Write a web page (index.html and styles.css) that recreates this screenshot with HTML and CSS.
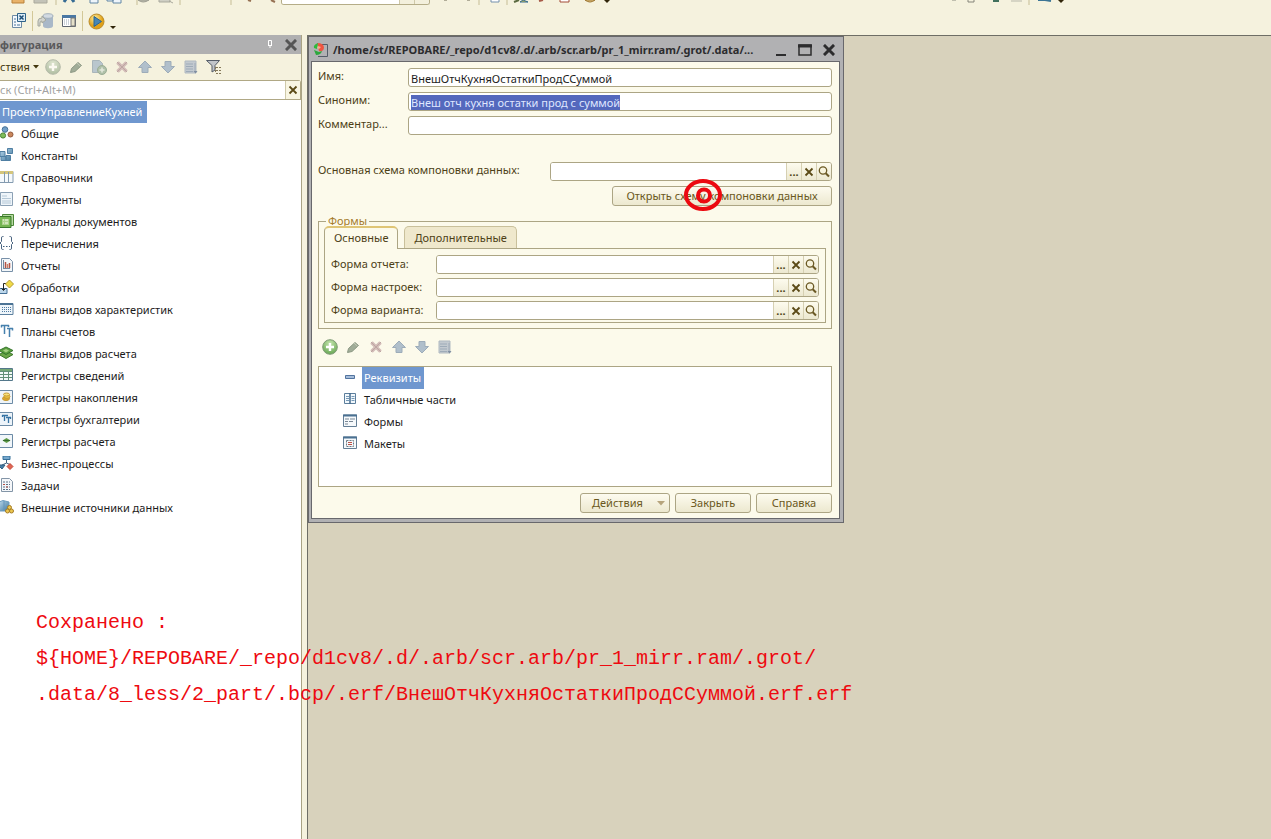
FILE: index.html
```
<!DOCTYPE html>
<html lang="ru">
<head>
<meta charset="utf-8">
<title>Конфигуратор</title>
<link rel="stylesheet" href="styles.css">
</head>
<body>
<svg class="defs" aria-hidden="true">
  <defs>
    <radialGradient id="green" cx="50%" cy="25%" r="75%"><stop offset="0" stop-color="#c3e4ac"/><stop offset="1" stop-color="#69a854"/></radialGradient>
    <radialGradient id="gold" cx="40%" cy="30%"><stop offset="0" stop-color="#fff0a0"/><stop offset="1" stop-color="#e0a018"/></radialGradient>
    <linearGradient id="blue" x2="1" y2="1"><stop offset="0" stop-color="#b9d8ec"/><stop offset="1" stop-color="#41779c"/></linearGradient>
  </defs>
  <symbol id="i-add" viewBox="0 0 16 16"><circle cx="8" cy="8" r="7.3" fill="url(#green)" stroke="#7f9a76"/><path d="M8 4v8M4 8h8" stroke="#fff" stroke-width="2.4"/></symbol>
  <symbol id="i-edit" viewBox="0 0 16 16"><path d="M2.500 13.500l1-4 6.500-6 3.500 3-6.500 6z" fill="#a1ad98" stroke="#8c9884"/><path d="M9 4l3.500 3.200" stroke="#c4cbb8"/></symbol>
  <symbol id="i-del" viewBox="0 0 16 16"><path d="M3.500 3.500l9 9M12.500 3.500l-9 9" stroke="#d3bcb8" stroke-width="3.500"/><path d="M3 3l10 10M13 3L3 13" stroke="#bda6a2" stroke-width="1"/></symbol>
  <symbol id="i-up" viewBox="0 0 16 16"><path d="M8 2l6.500 6.500H11v5H5v-5H1.500z" fill="#b0bfcb" stroke="#9dacb9"/></symbol>
  <symbol id="i-down" viewBox="0 0 16 16"><path d="M8 14L1.500 7.500H5v-5h6v5h3.500z" fill="#b0bfcb" stroke="#9dacb9"/></symbol>
  <symbol id="i-list" viewBox="0 0 16 16"><path d="M2 2h11v12H2z" fill="#c3cad0" stroke="#b0b9c1"/><path d="M3 5h7M3 7.500h7M3 10h7M3 12.500h7M12 4v9" stroke="#9eabb8"/><path d="M10.500 12h4L12.500 14.500z" fill="#7f8ea1"/></symbol>
  <symbol id="i-mag" viewBox="0 0 14 14"><circle cx="6" cy="5.500" r="3.700" fill="#f7f3dc" stroke="#6b5924" stroke-width="1.300"/><path d="M8.700 8.200l3.300 3.300" stroke="#6b5924" stroke-width="2"/></symbol>
  <symbol id="i-x" viewBox="0 0 10 10"><path d="M1.500 1.500l7 7M8.500 1.500l-7 7" stroke="#5b4a16" stroke-width="1.800"/></symbol>
</svg>

<div class="app">
  <header class="toolbars">
    <div class="bar bar-top">
      <svg width="281" height="6" viewBox="0 0 281 6" fill="none"><path d="M12 -1h12v4H12z" fill="#e8b269" stroke="#b9803b"/><path d="M34 -1h13v4H34z" fill="#c3c3b8" stroke="#aaa99c"/><path d="M56 0v5M137 0v5M180 0v5M231 0v5" stroke="#c6bd95"/><path d="M64 2l2-3M74 2l-2-3" stroke="#366b94" stroke-width="3"/><path d="M90 -1h8v4h-8zM107 -2h6v3h-6zM113 -1h8v4h-8z" fill="#eef5fb" stroke="#6386a4"/><path d="M138 0q5 4 11 0z" fill="#bcbcae" stroke="#9e9e92"/><path d="M159 -1h11v3h-11zM169 1l4 2" fill="#cfcfc4" stroke="#a9a99d"/><path d="M248 0l3 1M271 0l4 2" stroke="#967153" stroke-width="2"/></svg>
      <div class="combo"><input aria-label="Поиск текста"><button aria-label="Список"></button><button aria-label="Очистить"></button></div>
      <svg width="185" height="6" viewBox="0 0 185 6" fill="none"><path d="M14 0h3M37 0h3" stroke="#b1ad98" stroke-width="2"/><path d="M49 0v5M77 0v5" stroke="#c6bd95"/><path d="M61 -1h8v3h-8z" fill="#fff" stroke="#7590ac"/><path d="M84 2l5-2" stroke="#5b6a40" stroke-width="2"/><path d="M90 2l3-2 5 2z" fill="#e8d044" stroke="#356b91"/><path d="M109 1l4-1" stroke="#a75b49" stroke-width="2"/><path d="M130 -1h9v3h-9z" fill="#fff" stroke="#a24a36"/><path d="M155 0q5 4 10 0z" fill="#ead08c" stroke="#9a7330"/><path d="M174 0h6l-3 3z" fill="#302509"/></svg>
      <svg class="far" width="120" height="6" viewBox="0 0 120 6" fill="none"><path d="M2 0h4" stroke="#8c8c80"/><path d="M18 -1h6v3h-6z" stroke="#85857a"/><path d="M43 1h6" stroke="#40705c" stroke-width="2"/><path d="M61 1h11" stroke="#b7b7aa"/><path d="M79 0v5" stroke="#c6bd95"/><path d="M88 0h7l6 1" stroke="#3c7595" stroke-width="2"/><path d="M108 0h6l-3 3z" fill="#302509"/></svg>
    </div>
    <div class="bar bar-main">
      <button class="tool" aria-label="Закрыть конфигурацию"><svg width="16" height="16" viewBox="0 0 16 16" fill="none"><path d="M1.500 2.500h9v12h-9z" fill="#f4f8fb" stroke="#6e8ba5"/><path d="M3 6h2M3 9h2M3 12h2M6 12h3" stroke="#46729a"/><path d="M6.500.5h8v8h-8z" fill="#dcebf5" stroke="#2f6389"/><path d="M8.500 2.500l4 4M12.500 2.500l-4 4" stroke="#1c4e78" stroke-width="1.500"/></svg></button>
      <span class="sep"></span>
      <button class="tool" aria-label="Обновить базу"><svg width="17" height="16" viewBox="0 0 17 16"><path d="M6 3v10c0 3 10 3 10 0V3z" fill="#a9b8c8"/><ellipse cx="11" cy="3" rx="5" ry="2.300" fill="#d2dae2" stroke="#a3b0bc"/><path d="M1 13V8q0-3 4-3V3l4 4-4 3V8q-2 0-2 2v3z" fill="#d2d4ce" stroke="#a4a89f"/></svg></button>
      <button class="tool tool-gap" aria-label="Окно конфигурации"><svg width="16" height="14" viewBox="0 0 16 14"><path d="M1.500 1.500h13v11h-13z" fill="#fff" stroke="#5f6670"/><path d="M1 1h14v3H1z" fill="#4a78a4"/><path d="M3 6h5M3 8h5M3 10h5" stroke="#99a7b5" stroke-dasharray="1 1"/><path d="M10 4h4v8h-4z" fill="#e5e0c9" stroke="#777"/></svg></button>
      <span class="sep"></span>
      <button class="tool run" aria-label="Запустить"><svg width="17" height="17" viewBox="0 0 17 17"><circle cx="8.500" cy="8.500" r="7.500" fill="url(#gold)" stroke="#b98c2c"/><path d="M6 3.500l7.500 5-7.500 5z" fill="#4786b5" stroke="#2b648e"/></svg><svg width="6" height="4" viewBox="0 0 6 4"><path d="M0 0h6L3 3z" fill="#302509"/></svg></button>
    </div>
  </header>

  <div class="body">
    <aside class="side">
      <div class="side-title"><h2>фигурация</h2>
        <button aria-label="Закрепить"><svg width="7" height="9" viewBox="0 0 7 9"><path d="M1.500.5h3v5h-3z" fill="none" stroke="#fff"/><path d="M4.500 1v5M1 5.500h4M3 6v2" stroke="#fff"/></svg></button>
        <button class="side-close" aria-label="Закрыть панель"><svg width="12" height="12" viewBox="0 0 12 12"><path d="M2 2l8 8M10 2l-8 8" stroke="#555" stroke-width="3" stroke-linecap="square"/></svg></button>
      </div>
      <div class="side-tools">
        <button class="menu">ствия<svg width="6" height="4" viewBox="0 0 6 4"><path d="M0 0h6L3 3.500z" fill="#43370f"/></svg></button>
        <button aria-label="Добавить" class="faded"><svg width="16" height="16"><use href="#i-add"/></svg></button>
        <button aria-label="Изменить"><svg width="16" height="16"><use href="#i-edit"/></svg></button>
        <button aria-label="Копировать"><svg width="16" height="16" viewBox="0 0 16 16"><path d="M1.500 1.500h7l3 3v9h-10z" fill="#b9c6cd" stroke="#a9b5ba"/><circle cx="11" cy="11" r="4.500" fill="#afc0a8" stroke="#9bad95"/><path d="M11 8.500v5M8.500 11h5" stroke="#e4e8dc" stroke-width="1.500"/></svg></button>
        <button aria-label="Удалить"><svg width="16" height="16"><use href="#i-del"/></svg></button>
        <button aria-label="Вверх"><svg width="16" height="16"><use href="#i-up"/></svg></button>
        <button aria-label="Вниз"><svg width="16" height="16"><use href="#i-down"/></svg></button>
        <button aria-label="Упорядочить"><svg width="16" height="16"><use href="#i-list"/></svg></button>
        <button aria-label="Фильтр"><svg width="16" height="16" viewBox="0 0 16 16" fill="none"><path d="M.5 1.500h13L9 6.500V11l-3 2V6.500z" fill="#c1c5ca" stroke="#555d68"/><path d="M9.500 8v6M10 8.500h5M10 11.500h5M10 14.500h5" stroke="#85795a" stroke-dasharray="2 1"/></svg></button>
      </div>
      <div class="search"><input aria-label="Поиск" placeholder="ск (Ctrl+Alt+M)"><button aria-label="Очистить поиск"><svg width="10" height="10"><use href="#i-x"/></svg></button></div>
      <div class="tree">
        <div class="root">ПроектУправлениеКухней</div>
        <ul>
          <li><svg viewBox="0 0 14 14"><circle cx="5" cy="3.500" r="2.800" fill="#72a0c8" stroke="#456f96"/><circle cx="3" cy="9.500" r="2.600" fill="#7fbc5a" stroke="#4b8637"/><circle cx="10.500" cy="8.500" r="2.500" fill="#c9875d" stroke="#91583b"/></svg>Общие</li>
          <li><svg viewBox="0 0 14 14"><path d="M0 3.500h5v5H0zM1 8.500h5v4H1zM6 7.500h4.500v5H6zM7.500.5h5v5h-5z" fill="url(#blue)" stroke="#4f7fa3"/></svg>Константы</li>
          <li><svg viewBox="0 0 14 14"><path d="M-1 1.500h14v11H-1z" fill="#f5f9fc" stroke="#849bb0"/><path d="M0 1h13v3H0z" fill="#d4c57c"/><path d="M4.500 2v10M8.500 2v10" stroke="#849bb0"/></svg>Справочники</li>
          <li><svg viewBox="0 0 14 14"><path d="M.5.5h12v13H.5z" fill="#eff5fa" stroke="#8ca1b5"/><path d="M2 4h5M2 6.500h9M2 9h9M2 11h9" stroke="#b4c7d6"/></svg>Документы</li>
          <li><svg viewBox="0 0 14 14"><path d="M2.500 .5h11v11H3z" fill="#b8dba4" stroke="#4d8739"/><path d="M-1 2.500h12v11H-1z" fill="#75b552" stroke="#3b782d"/><path d="M2 5h7v6H2z" fill="#acd18c"/><path d="M3 6h1M5 6h3M3 9h1M5 9h3" stroke="#f2f9e9"/></svg>Журналы документов</li>
          <li><svg viewBox="0 0 14 14" fill="none"><path d="M3.500.5h-1Q1.500.5 1.500 2v3.500L0 7l1.500 1.500V12q0 1.500 1 1.500h1M9.500.5h1q1 0 1 1.500v3.500L13 7l-1.500 1.500V12q0 1.500-1 1.500h-1" stroke="#4b6580"/><path d="M3 10.500h1.500M6 10.500h1.500M9 10.500h1" stroke="#3d5c7c"/></svg>Перечисления</li>
          <li><svg viewBox="0 0 14 14"><path d="M1.500.5h8l3 3v10h-11z" fill="#f3f7fa" stroke="#7890a8"/><path d="M3.500 2v8M3 10.500h7" stroke="#758a9e"/><path d="M5.500 4v6M9.500 5v5" stroke="#b45345" stroke-width="1.500"/><path d="M7.500 6v4" stroke="#cc8066" stroke-width="1.500"/></svg>Отчеты</li>
          <li><svg viewBox="0 0 14 14"><path d="M-1 8.500h8v5h-8z" fill="#bdd7eb" stroke="#457198"/><path d="M6 3.500H3.500V10M1.500 8.500l2 2 2-2" fill="none" stroke="#222"/><path d="M9.500 0l4 4-4 4-4-4z" fill="#f0da47" stroke="#b59b2e"/></svg>Обработки</li>
          <li><svg viewBox="0 0 14 14"><path d="M-1 1.500h14v11H-1z" fill="#eef5fa" stroke="#5b7f9e"/><path d="M0 2h13" stroke="#4b7395" stroke-width="2"/><path d="M2 5.500h9M2 7.500h9M2 9.500h9" stroke="#4f7ba3" stroke-dasharray="1 1"/></svg>Планы видов характеристик</li>
          <li><svg viewBox="0 0 14 14"><path d="M1 1.500h8M4.500 1.500V10M7 4.500h6M9.500 4.500V13M1.500 1v2.500M8.500 1v2M12.500 4v2.500" fill="none" stroke="#4680ad" stroke-width="1.500"/></svg>Планы счетов</li>
          <li><svg viewBox="0 0 14 14"><path d="M6 5l7 3.500-7 4-7-4z" fill="#6ba548" stroke="#3b7729"/><path d="M6 1l7 3.500-7 4-7-4z" fill="#5d9f41" stroke="#34752b"/><path d="M6 3l3 1.500-3 2-3-2z" fill="#a5cf83"/></svg>Планы видов расчета</li>
          <li><svg viewBox="0 0 14 14"><path d="M-.5.5h13v12h-13z" fill="#f5faf8" stroke="#54788b"/><path d="M0 3.500h12M0 6.500h12M0 9.500h12M3.500 2v10M8.500 2v10" stroke="#649076"/><path d="M0 2h12" stroke="#74a775" stroke-width="2"/></svg>Регистры сведений</li>
          <li><svg viewBox="0 0 14 14"><path d="M-.5.5h13v13h-13z" fill="#eff4f8" stroke="#6c8ba6"/><ellipse cx="6" cy="8.500" rx="3.500" ry="2" fill="#dca72c" stroke="#c79a33"/><ellipse cx="7" cy="6.500" rx="3" ry="1.800" fill="#edc744" stroke="#c79a33"/><ellipse cx="6.500" cy="4.500" rx="3" ry="1.500" fill="#f7e17a" stroke="#c79a33"/></svg>Регистры накопления</li>
          <li><svg viewBox="0 0 14 14"><path d="M-.5.5h13v13h-13z" fill="#edf4fa" stroke="#6c8ba6"/><path d="M2 3.500h6M4.500 3.500V9M6 5.500h5M8.500 5.500V11M2.500 3v2M10.500 5v2" fill="none" stroke="#3674a5" stroke-width="1.300"/></svg>Регистры бухгалтерии</li>
          <li><svg viewBox="0 0 14 14"><path d="M-.5.5h13v13h-13z" fill="#f1f6fa" stroke="#6c8ba6"/><path d="M6.500 4l4 2.500-4 2.500-4-2.500z" fill="#5e9a47"/><path d="M3 6.500h7" stroke="#346d2e"/></svg>Регистры расчета</li>
          <li><svg viewBox="0 0 14 14"><path d="M3 0h7v3.500H3z" fill="#76a8cd" stroke="#37709a"/><path d="M6.500 4v3M2 9l4.500-2L11 9" fill="none" stroke="#43637e"/><path d="M-2 9h7l-3 4z" fill="#487fa6" stroke="#305d7f"/><path d="M10 7.500l3 3-3 3-3-3z" fill="#e06553" stroke="#c44a3a"/></svg>Бизнес-процессы</li>
          <li><svg viewBox="0 0 14 14"><path d="M1.500.5h8l3 3v10h-11z" fill="#f5f7fa" stroke="#8395a7"/><path d="M3 4h7M3 6.500h7M3 9h7M3 11.500h7" stroke="#5a7086" stroke-dasharray="2 1"/><path d="M3 6.500h2M6 9h2" stroke="#b54e45"/></svg>Задачи</li>
          <li><svg viewBox="0 0 14 14"><path d="M-1 2l4-1.500L9 2v9H-1z" fill="url(#blue)" stroke="#6c9cbf"/><path d="M4 1v10" stroke="#6496bc"/><circle cx="9.500" cy="7.500" r="2" fill="#ecc74f" stroke="#a67c24"/><circle cx="7.500" cy="11" r="2" fill="#ecc74f" stroke="#a67c24"/><circle cx="11.500" cy="11" r="2" fill="#ecc74f" stroke="#a67c24"/></svg>Внешние источники данных</li>
        </ul>
      </div>
    </aside>

    <main class="desk">
      <section class="window" aria-labelledby="wtitle">
        <div class="titlebar">
          <svg width="16" height="14" viewBox="0 0 16 14"><path d="M9 1.500h5.500v12H5" fill="none" stroke="#555d68"/><path d="M4 0q7 0 7 5-1 4-5 3z" fill="#ef5540"/><path d="M5 0Q0 2 1 5l3 1z" fill="#2dbb3c"/><path d="M1 7l5 2 3-1q-1 4-6 4z" fill="#2da83d"/><path d="M5 3l3 1-2 2-2-1z" fill="#f4b191"/></svg>
          <h1 id="wtitle">/home/st/REPOBARE/_repo/d1cv8/.d/.arb/scr.arb/pr_1_mirr.ram/.grot/.data/...</h1>
          <button aria-label="Свернуть"><svg width="12" height="12" viewBox="0 0 12 12"><path d="M1 11h10" stroke="#2c2c2e" stroke-width="2"/></svg></button>
          <button aria-label="Развернуть"><svg width="14" height="12" viewBox="0 0 14 12"><path d="M1 1h12v10H1z" fill="none" stroke="#2c2c2e" stroke-width="1.500"/><path d="M0 2h14" stroke="#2c2c2e" stroke-width="3"/></svg></button>
          <button aria-label="Закрыть окно"><svg width="12" height="12" viewBox="0 0 12 12"><path d="M2 2l8 8M10 2l-8 8" stroke="#2c2c2e" stroke-width="3" stroke-linecap="square"/></svg></button>
        </div>
        <form class="form">
          <div class="row"><label for="name">Имя:</label><input class="box" id="name" value="ВнешОтчКухняОстаткиПродССуммой"></div>
          <div class="row"><label for="syn">Синоним:</label><input class="box" id="syn" value="Внеш отч кухня остатки прод с суммой"></div>
          <div class="row"><label for="com">Комментар...</label><input class="box" id="com"></div>
          <div class="row scheme"><label for="sch">Основная схема компоновки данных:</label>
            <div class="box pick"><input id="sch"><button type="button">...</button><button type="button" aria-label="Очистить"><svg width="10" height="10"><use href="#i-x"/></svg></button><button type="button" aria-label="Открыть"><svg width="14" height="14"><use href="#i-mag"/></svg></button></div></div>
          <div class="open-row"><button type="button" class="btn open">Открыть схему компоновки данных</button>
            <svg class="ring" width="40" height="34" viewBox="0 0 40 34" fill="none" stroke="#ec0910" stroke-width="4"><ellipse cx="20" cy="17" rx="17" ry="14"/><circle cx="21" cy="17.500" r="6"/></svg></div>
          <fieldset>
            <legend>Формы</legend>
            <div class="tabs" role="tablist"><button type="button" class="tab active" role="tab" aria-selected="true">Основные</button><button type="button" class="tab" role="tab" aria-selected="false">Дополнительные</button></div>
            <div class="panel">
              <div class="row"><label for="f1">Форма отчета:</label><div class="box pick"><input id="f1"><button type="button">...</button><button type="button" aria-label="Очистить"><svg width="10" height="10"><use href="#i-x"/></svg></button><button type="button" aria-label="Открыть"><svg width="14" height="14"><use href="#i-mag"/></svg></button></div></div>
              <div class="row"><label for="f2">Форма настроек:</label><div class="box pick"><input id="f2"><button type="button">...</button><button type="button" aria-label="Очистить"><svg width="10" height="10"><use href="#i-x"/></svg></button><button type="button" aria-label="Открыть"><svg width="14" height="14"><use href="#i-mag"/></svg></button></div></div>
              <div class="row"><label for="f3">Форма варианта:</label><div class="box pick"><input id="f3"><button type="button">...</button><button type="button" aria-label="Очистить"><svg width="10" height="10"><use href="#i-x"/></svg></button><button type="button" aria-label="Открыть"><svg width="14" height="14"><use href="#i-mag"/></svg></button></div></div>
            </div>
          </fieldset>
          <div class="list-tools">
            <button type="button" aria-label="Добавить"><svg width="16" height="16"><use href="#i-add"/></svg></button>
            <button type="button" aria-label="Изменить"><svg width="16" height="16"><use href="#i-edit"/></svg></button>
            <button type="button" aria-label="Удалить"><svg width="16" height="16"><use href="#i-del"/></svg></button>
            <button type="button" aria-label="Вверх"><svg width="16" height="16"><use href="#i-up"/></svg></button>
            <button type="button" aria-label="Вниз"><svg width="16" height="16"><use href="#i-down"/></svg></button>
            <button type="button" aria-label="Упорядочить"><svg width="16" height="16"><use href="#i-list"/></svg></button>
          </div>
          <ul class="parts">
            <li><svg viewBox="0 0 14 14"><path d="M2.500 5.500h9v3h-9z" fill="#a6bdda" stroke="#52749f"/></svg><span class="sel">Реквизиты</span></li>
            <li><svg viewBox="0 0 14 14"><path d="M1.500 1.500h11v10h-11z" fill="#f2f8fc" stroke="#5c7e9c"/><path d="M7 1v11" stroke="#456b8e" stroke-width="1.500"/><path d="M3 4.500h3M3 6.500h3M3 8.500h3M8.500 4.500h3M8.500 6.500h3M8.500 8.500h3" stroke="#7599b7"/></svg><span>Табличные части</span></li>
            <li><svg viewBox="0 0 14 14"><path d="M.5 1h13v11.500H.5z" fill="#f6f9fb" stroke="#647e95"/><path d="M0 1.500h14" stroke="#4b7192" stroke-width="2"/><path d="M2 5h4M2 7.500h3M2 10h3M7 5h5M6 7.500h4" stroke="#798795"/></svg><span>Формы</span></li>
            <li><svg viewBox="0 0 14 14"><path d="M.5 1h13v11.500H.5z" fill="#f6f9fb" stroke="#647e95"/><path d="M0 1.500h14" stroke="#4b7192" stroke-width="2"/><path d="M3.500 4.500h7v6h-7z" fill="none" stroke="#6a7885" stroke-dasharray="2 1"/><path d="M5 6.500h4M5 8.500h4" stroke="#bd5145"/></svg><span>Макеты</span></li>
          </ul>
          <div class="actions">
            <button type="button" class="btn drop">Действия<svg width="8" height="5" viewBox="0 0 8 5"><path d="M0 0h8L4 4.500z" fill="#b6a47c"/></svg></button>
            <button type="button" class="btn">Закрыть</button>
            <button type="button" class="btn">Справка</button>
          </div>
        </form>
      </section>
    </main>
  </div>
  <p class="note">Сохранено :<br>${HOME}/REPOBARE/_repo/d1cv8/.d/.arb/scr.arb/pr_1_mirr.ram/.grot/<br>.data/8_less/2_part/.bcp/.erf/ВнешОтчКухняОстаткиПродССуммой.erf.erf</p>
</div>
<script src="app.js"></script>
</body>
</html>
```
FILE: styles.css
```
* { box-sizing: border-box; }
body { margin: 0; font: 11px/16px "Noto Sans", "Open Sans", sans-serif; color: #1c1c1c; background: #f5f2de; }
button, input { font: inherit; color: inherit; }
button { display: flex; align-items: center; justify-content: center; padding: 0; border: 0; background: none; }
input { min-width: 0; border: 0; outline: 0; background: #fff; }
h1, h2, p, ul { margin: 0; padding: 0; font-size: inherit; list-style: none; }
svg { flex: none; display: block; }
.defs { position: absolute; width: 0; height: 0; }
.app { position: relative; display: flex; flex-direction: column; min-height: 100vh; overflow: hidden; }

.toolbars { height: 35px; flex: none; }
.bar { display: flex; align-items: center; }
.bar-top { height: 6px; align-items: flex-start; }
.combo { display: flex; width: 149px; height: 5px; border: 1px solid #b5ad88; border-top: 0; border-radius: 0 0 3px 3px; overflow: hidden; background: #fff; }
.combo input { flex: 1; height: 4px; padding: 0; }
.combo button { width: 15px; border-left: 1px solid #cfc9a9; background: #f3f0dc; }
.far { margin-left: 335px; }
.bar-main { height: 30px; padding-left: 11px; }
.sep { width: 1px; height: 20px; margin: 0 4px 0 5px; background: #d3c898; }
.tool-gap { margin-left: 7px; }
.run { gap: 5px; align-items: flex-end; }
.bar-main .sep + .run { margin-left: 1px; }

.body { display: flex; flex: 1; }
.side { display: flex; flex-direction: column; flex: none; width: 302px; border-right: 1px solid #a9a384; }
.side-title { display: flex; align-items: center; height: 19px; padding-right: 4px; background: #b0b0b1; color: #59595b; }
.side-title h2 { flex: 1; font-weight: 700; }
.side-close { margin-left: 11px; }
.side-tools { display: flex; align-items: center; gap: 7px; height: 26px; padding-bottom: 1px; }
.menu { gap: 3px; width: 38px; justify-content: flex-start; color: #43370f; }
.faded { opacity: 0.6; filter: saturate(0.4); }
.search { display: flex; height: 20px; border: 1px solid #b0a885; border-left: 0; border-radius: 0 3px 0 0; background: #fff; }
.search input { flex: 1; padding: 0; }
.search ::placeholder { color: #a2a2a2; opacity: 1; }
.search button { width: 15px; border-left: 1px solid #cfc9a9; background: #f8f5e2; }
.tree { flex: 1; padding-top: 1px; background: #fff; }
.root { width: max-content; height: 22px; padding: 0 5px 0 2px; line-height: 22px; color: #fff; background: #6f97cf; }
.tree li { display: flex; align-items: center; gap: 7px; height: 22px; }
.tree li svg { width: 14px; height: 14px; margin-bottom: 2px; }

.desk { position: relative; flex: 1; margin-left: 5px; border-top: 1px solid #6e6e66; border-left: 1px solid #6e6e66; background: #d8d2bc; }
.window { position: absolute; left: 0; top: 0; width: 536px; padding: 0 3px 3px 2px; border: 1px solid #68686c; background: #b1b1b3; }
.titlebar { display: flex; align-items: center; gap: 11px; height: 24px; padding: 2px 5px 0 2px; color: #2c2c2e; }
.titlebar h1 { flex: 1; margin-left: -7px; font-weight: 700; white-space: nowrap; }
.form { padding: 6px 7px 5px 6px; border: 1px solid #68686c; background: #fcfaeb; color: #4d3f16; }
.row { display: flex; align-items: flex-start; }
.form > .row { margin-bottom: 5px; }
.row label { flex: none; width: 90px; white-space: nowrap; }
.box { flex: 1; height: 19px; border: 1px solid #aca584; border-radius: 3px; background: #fff; overflow: hidden; }
input.box { padding: 2px 2px 0; color: #1c1c1c; }
#syn::selection { color: #dfe6ff; background: #5468bd; }
.pick { display: flex; }
.pick input { flex: 1; padding: 0 2px; }
.pick button { width: 15px; border-left: 1px solid #d6d0b2; background: linear-gradient(#fdfbee, #ece8d0); font-weight: 700; }
.form > .scheme { margin: 27px 0 5px; }
.scheme label { width: 232px; }
.btn { height: 20px; min-width: 76px; padding: 0 11px; border: 1px solid #aca584; border-radius: 3px; background: linear-gradient(#fdfbef, #ece8cf); color: #6a5820; white-space: nowrap; }
.open-row { position: relative; display: flex; justify-content: flex-end; }
.open { width: 220px; }
.ring { position: absolute; right: 109px; top: -8px; }
fieldset { min-width: 0; margin: 8px 0 0; padding: 0 5px 5px; border: 1px solid #aca584; }
legend { height: 14px; margin-left: 2px; padding: 0 2px; line-height: 14px; color: #a57b2c; }
.tabs { display: flex; gap: 6px; margin-top: -2px; }
.tab { position: relative; height: 22px; padding: 0 9px; border: 1px solid #c9c09b; border-bottom: 0; border-radius: 5px 5px 0 0; background: #efe8cc; color: #4d3f16; }
.active { z-index: 1; height: 23px; margin-bottom: -1px; padding-bottom: 2px; border-color: #aca584; border-top: 2px solid #dfc576; background: #fcfaeb; }
.panel { display: grid; gap: 4px; padding: 6px 6px 2px; border: 1px solid #aca584; }
.panel label { width: 105px; padding-top: 1px; }
.list-tools { display: flex; gap: 7px; padding: 10px 4px 11px; }
.parts { height: 121px; border: 1px solid #aca584; background: #fff; color: #1c1c1c; }
.parts li { display: flex; align-items: center; gap: 5px; height: 22px; padding-left: 24px; }
.parts svg { width: 14px; height: 14px; margin-bottom: 2px; }
.parts span { height: 22px; padding: 0 3px 0 2px; line-height: 22px; }
.parts .sel { color: #fff; background: #6f97cf; }
.actions { display: flex; justify-content: flex-end; gap: 5px; margin-top: 6px; }
.drop { width: 90px; padding: 0 4px 0 11px; justify-content: space-between; }

.note { position: absolute; left: 36px; top: 605px; font: 20px/36px "Liberation Mono", monospace; color: #ee0a10; white-space: nowrap; pointer-events: none; }
```
FILE: app.js
```
document.getElementById("syn").select();
```
